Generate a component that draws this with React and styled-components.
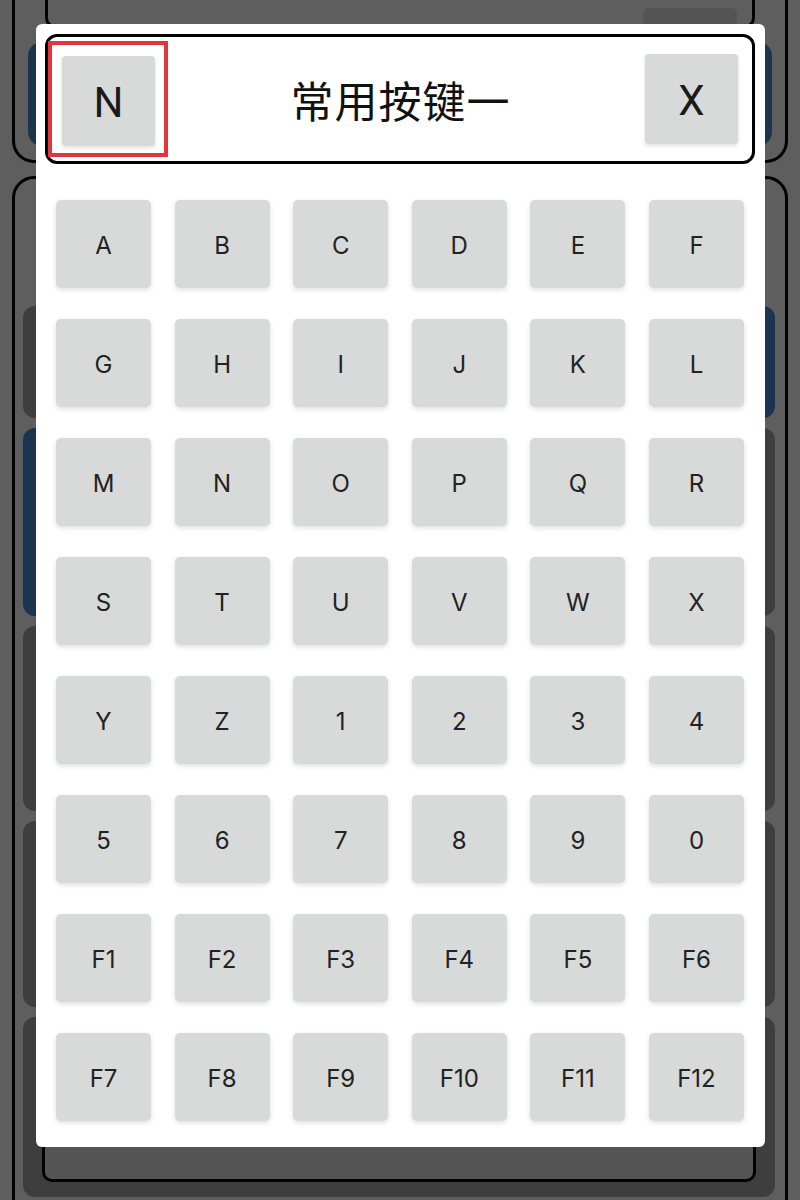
import React from "react";
import styled, { createGlobalStyle } from "styled-components";

const GlobalStyle = createGlobalStyle`
  html, body {
    margin: 0;
    padding: 0;
    background: #5e5e5e;
  }
  * {
    box-sizing: border-box;
  }
`;

const KEYS = [
  "A", "B", "C", "D", "E", "F",
  "G", "H", "I", "J", "K", "L",
  "M", "N", "O", "P", "Q", "R",
  "S", "T", "U", "V", "W", "X",
  "Y", "Z", "1", "2", "3", "4",
  "5", "6", "7", "8", "9", "0",
  "F1", "F2", "F3", "F4", "F5", "F6",
  "F7", "F8", "F9", "F10", "F11", "F12",
];

// rows of the page that sits behind the dimmed overlay
const ROWS = [
  { left: "dark", right: "blue", height: 112 },
  { left: "blue", right: "dark", height: 188 },
  { left: "dark", right: "dark", height: 185 },
  { left: "dark", right: "dark", height: 186 },
];

export default function App() {
  return (
    <Screen>
      <GlobalStyle />
      <Backdrop>
        <TopCard>
          <TopBar>
            <GhostButton />
          </TopBar>
          <BigButton />
        </TopCard>
        <ListCard>
          {ROWS.map((row, i) => (
            <ListRow key={i} $height={row.height}>
              <RowHalf $tone={row.left} />
              <RowHalf $tone={row.right} />
            </ListRow>
          ))}
          <LastRow>
            <LastBox />
          </LastRow>
        </ListCard>
      </Backdrop>

      <Overlay>
        <Modal>
          <Header>
            <Highlight>
              <HeadButton>N</HeadButton>
            </Highlight>
            <Title>常用按键一</Title>
            <HeadButton>X</HeadButton>
          </Header>
          <KeyGrid>
            {KEYS.map((k) => (
              <Key key={k}>{k}</Key>
            ))}
          </KeyGrid>
        </Modal>
      </Overlay>
    </Screen>
  );
}

const Screen = styled.div`
  position: relative;
  width: 800px;
  height: 1200px;
  overflow: hidden;
  background: #5e5e5e;
`;

const Backdrop = styled.div`
  display: flex;
  flex-direction: column;
  gap: 13px;
  padding: 0 12px;
`;

const TopCard = styled.div`
  height: 183px;
  margin-top: -20px;
  border: 3px solid #000;
  border-top: none;
  border-radius: 0 0 22px 22px;
  display: flex;
  flex-direction: column;
  align-items: center;
`;

const TopBar = styled.div`
  width: 710px;
  height: 48px;
  border: 3px solid #000;
  border-top: none;
  border-radius: 0 0 10px 10px;
  display: flex;
  justify-content: flex-end;
  padding: 28px 15px 0 0;
`;

const GhostButton = styled.div`
  width: 94px;
  height: 40px;
  border-radius: 6px;
  background: #545454;
`;

const BigButton = styled.div`
  width: 744px;
  height: 104px;
  margin-top: 14px;
  border-radius: 14px;
  background: #1e344c;
`;

const ListCard = styled.div`
  height: 1100px;
  border: 3px solid #000;
  border-radius: 22px;
  padding: 127px 10px 0 8px;
  display: flex;
  flex-direction: column;
  gap: 10px;
`;

const ListRow = styled.div`
  height: ${(p) => p.$height}px;
  display: grid;
  grid-template-columns: 1fr 1fr;
  gap: 8px;
`;

const RowHalf = styled.div`
  border-radius: 12px;
  background: ${(p) => (p.$tone === "blue" ? "#1b3550" : "#3e3e3e")};
`;

const LastRow = styled.div`
  height: 180px;
  border-radius: 12px;
  background: #3e3e3e;
  padding: 0 19px 15px;
  display: flex;
  align-items: flex-end;
`;

const LastBox = styled.div`
  width: 100%;
  height: 120px;
  border: 3px solid #000;
  border-radius: 10px;
  background: #555;
`;

const Overlay = styled.div`
  position: absolute;
  inset: 0;
  padding: 24px 0 0 36px;
`;

const Modal = styled.div`
  width: 729px;
  height: 1123px;
  background: #fff;
  border-radius: 6px;
  padding: 10px 10px 0 9px;
  display: flex;
  flex-direction: column;
`;

const Header = styled.div`
  height: 130px;
  border: 3px solid #000;
  border-radius: 12px;
  display: flex;
  align-items: center;
  padding-right: 14px;
`;

const Highlight = styled.div`
  border: 4px solid #e2353c;
  padding: 11px 9px 7px 10px;
`;

const HeadButton = styled.div`
  width: 93px;
  height: 90px;
  background: #d8d9d9;
  border-radius: 4px;
  box-shadow: 0 2px 4px rgba(0, 0, 0, 0.12);
  display: flex;
  align-items: center;
  justify-content: center;
  padding-top: 3px;
  font-family: Roboto, "Liberation Sans", sans-serif;
  font-size: 42px;
  color: #1a1a1a;
`;

const Title = styled.div`
  flex: 1;
  text-align: center;
  font-family: "Noto Sans CJK SC", "Noto Sans", sans-serif;
  font-size: 43px;
  letter-spacing: 1px;
  color: #111;
  padding-right: 12px;
`;

const KeyGrid = styled.div`
  margin-top: 36px;
  padding: 0 11px;
  display: grid;
  grid-template-columns: repeat(6, 95px);
  grid-auto-rows: 88px;
  justify-content: space-between;
  row-gap: 31px;
`;

const Key = styled.div`
  background: #d8d9d9;
  border-radius: 5px;
  box-shadow: 0 2px 5px rgba(0, 0, 0, 0.13);
  display: flex;
  align-items: center;
  justify-content: center;
  padding-top: 3px;
  font-family: Inter, "Noto Sans", sans-serif;
  font-size: 24px;
  color: #222;
`;
